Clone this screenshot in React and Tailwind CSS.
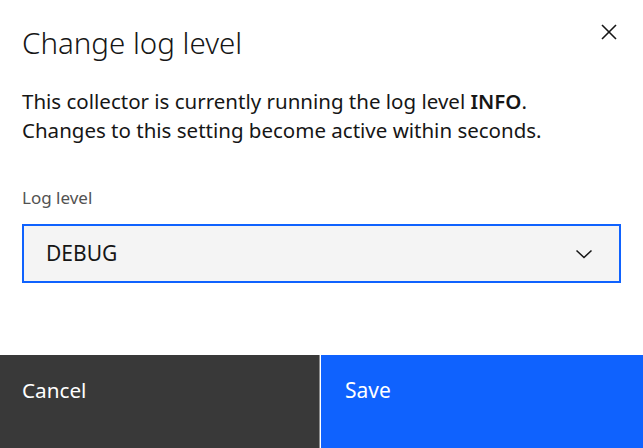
import React from 'react';

const App = () => {
  return (
    <div className="w-[643px] h-[448px] bg-white flex flex-col overflow-hidden" style={{ fontFamily: '"Noto Sans", Roboto, sans-serif' }}>
      <div className="flex items-start justify-between pl-[22px] pr-[22px] pt-[24px]">
        <h1 className="text-[29.5px] font-light text-[#161616] leading-[38px]">Change log level</h1>
        <button className="mt-[0px] mr-[2px] text-[#161616]" aria-label="Close">
          <svg width="20" height="20" viewBox="0 0 20 20" fill="none" stroke="currentColor" strokeWidth="1.6">
            <line x1="3" y1="1" x2="17" y2="15" />
            <line x1="17" y1="1" x2="3" y2="15" />
          </svg>
        </button>
      </div>

      <div className="px-[22px] pt-[25px] text-[20.5px] leading-[29px] text-[#161616]">
        <p>This collector is currently running the log level <span className="font-semibold">INFO</span>.</p>
        <p>Changes to this setting become active within seconds.</p>
      </div>

      <div className="px-[22px] pt-[42px]">
        <label className="block text-[17px] text-[#525252] leading-[22px] mb-[15px]">Log level</label>
        <div className="h-[59px] bg-[#f4f4f4] border-2 border-[#0f62fe] flex items-center justify-between pl-[22px] pr-[26px]">
          <span className="text-[21px] text-[#161616]">DEBUG</span>
          <svg width="18" height="10" viewBox="0 0 18 10" fill="none" stroke="#161616" strokeWidth="1.5">
            <polyline points="1.5,1.5 9,8.5 16.5,1.5" />
          </svg>
        </div>
      </div>

      <div className="mt-auto flex h-[93px]">
        <button className="w-[320px] bg-[#393939] text-white text-[20.7px] text-left pl-[22px] pb-[22px] border-r border-[#8d8d8d]">Cancel</button>
        <button className="flex-1 bg-[#0f62fe] text-white text-[21px] text-left pl-[24px] pb-[22px] ml-[1px]">Save</button>
      </div>
    </div>
  );
};

export default App;
